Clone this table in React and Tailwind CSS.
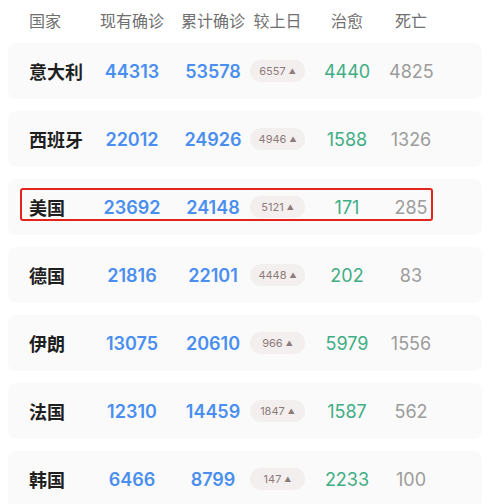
import React from 'react';

const rows = [
  { name: '意大利', now: '44313', total: '53578', diff: '6557', cured: '4440', dead: '4825' },
  { name: '西班牙', now: '22012', total: '24926', diff: '4946', cured: '1588', dead: '1326' },
  { name: '美国', now: '23692', total: '24148', diff: '5121', cured: '171', dead: '285', marked: true },
  { name: '德国', now: '21816', total: '22101', diff: '4448', cured: '202', dead: '83' },
  { name: '伊朗', now: '13075', total: '20610', diff: '966', cured: '5979', dead: '1556' },
  { name: '法国', now: '12310', total: '14459', diff: '1847', cured: '1587', dead: '562' },
  { name: '韩国', now: '6466', total: '8799', diff: '147', cured: '2233', dead: '100' },
];

const cjk = { fontFamily: '"Noto Sans CJK SC", "Noto Sans", sans-serif' };
const num = { fontFamily: 'Inter, "Noto Sans", sans-serif' };

const App = () => {
  return (
    <div className="w-[490px] h-[504px] overflow-hidden bg-white">
      {/* header */}
      <div className="h-[39px] flex items-center pl-[29px] text-[16px] text-[#6f6f6f]" style={cjk}>
        <div className="w-[67px]">国家</div>
        <div className="w-[72px] text-center">现有确诊</div>
        <div className="w-[74px] ml-2 text-center">累计确诊</div>
        <div className="w-[55px] text-center">较上日</div>
        <div className="w-[84px] text-center">治愈</div>
        <div className="w-[44px] text-center">死亡</div>
      </div>

      {/* list */}
      <div className="flex flex-col gap-3 px-2 pt-1">
        {rows.map((r) => (
          <div key={r.name} className="relative h-[56px] shrink-0 flex items-center pl-[21px] rounded-lg bg-[#fafafa]">
            <div className="w-[67px] text-[18px] font-bold text-[#1f1f1f]" style={cjk}>{r.name}</div>
            <div className="w-[72px] text-center text-[18px] font-semibold text-[#4a8ff0]" style={num}>{r.now}</div>
            <div className="w-[74px] ml-2 text-center text-[18px] font-semibold text-[#4a8ff0]" style={num}>{r.total}</div>
            <div className="w-[55px] flex justify-center">
              <div className="w-[55px] h-[22px] rounded-full bg-[#f3efee] flex items-center justify-center gap-[3px] text-[11px] text-[#8d7a7a]" style={num}>
                <span>{r.diff}</span>
                <span className="text-[7px] leading-none">▲</span>
              </div>
            </div>
            <div className="w-[84px] text-center text-[18px] text-[#40ad84]" style={num}>{r.cured}</div>
            <div className="w-[44px] text-center text-[18px] text-[#9c9c9c]" style={num}>{r.dead}</div>

            {r.marked && (
              <div className="absolute left-3 top-[9px] w-[413px] h-[33px] border-2 border-[#e3241d] rounded-[3px] pointer-events-none" />
            )}
          </div>
        ))}
      </div>
    </div>
  );
};

export default App;
